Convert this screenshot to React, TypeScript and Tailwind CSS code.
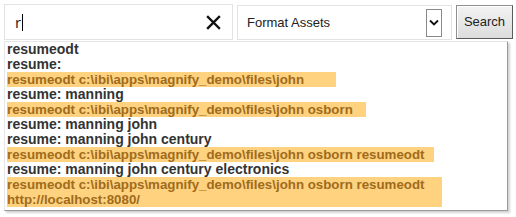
import React from 'react';

type Row = { text: string; hit?: boolean; w?: string };

const rows: Row[] = [
  { text: 'resumeodt' },
  { text: 'resume:' },
  { text: 'resumeodt c:\\ibi\\apps\\magnify_demo\\files\\john', hit: true, w: 'w-[329px]' },
  { text: 'resume: manning' },
  { text: 'resumeodt c:\\ibi\\apps\\magnify_demo\\files\\john osborn', hit: true, w: 'w-[359px]' },
  { text: 'resume: manning john' },
  { text: 'resume: manning john century' },
  { text: 'resumeodt c:\\ibi\\apps\\magnify_demo\\files\\john osborn resumeodt', hit: true, w: 'w-[427px]' },
  { text: 'resume: manning john century electronics' },
];

export default function App() {
  return (
    <div className="w-[516px] h-[217px] bg-white font-['Liberation_Sans',Arial,sans-serif]">
      {/* Search bar */}
      <div className="flex items-start gap-[4px] pl-[4px] pt-[4px]">
        <div className="w-[229px] h-[36px] border border-[#e3e3e3] flex items-center pl-[10px] pr-[11px]">
          <span className="text-[15px] text-[#222] font-['Open_Sans',sans-serif] leading-none">r</span>
          <span className="w-px h-[17px] bg-black ml-px" />
          <div className="flex-1" />
          <svg width="15" height="15" viewBox="0 0 15 15">
            <path d="M2 2 L13 13 M13 2 L2 13" stroke="#111" strokeWidth="2.4" strokeLinecap="square" />
          </svg>
        </div>
        <div className="w-[215px] h-[35px] mt-px border border-[#e3e3e3] flex items-center pl-[9px] pr-[9px]">
          <span className="text-[13px] text-[#222] flex-1">Format Assets</span>
          <div className="w-[16px] h-[28px] border border-[#8a8a8a] bg-white flex items-center justify-center">
            <svg width="10" height="7" viewBox="0 0 10 7">
              <path d="M1 1.5 L5 5.5 L9 1.5" stroke="#111" strokeWidth="1.8" fill="none" />
            </svg>
          </div>
        </div>
        <button className="w-[57px] h-[34px] mt-px border border-[#8f8f8f] border-r-[#5a5a5a] border-b-[#5a5a5a] bg-gradient-to-b from-[#f3f3f3] to-[#dcdcdc] text-[13px] text-[#222] shadow-[inset_1px_1px_0_#fff]">
          Search
        </button>
      </div>

      {/* Suggestions */}
      <div className="ml-[4px] mt-px w-[504px] border border-[#e6e6e6] border-r-[#9a9a9a] border-b-[#9a9a9a] shadow-[2px_2px_2px_rgba(0,0,0,0.18)] pl-[2px] pb-[3px] leading-[15px] font-bold">
        {rows.map((r, i) =>
          r.hit ? (
            <div key={i} className={`${r.w} text-[13.3px] bg-[#fed27e] text-[#a06b1c] whitespace-nowrap`}>
              {r.text}
            </div>
          ) : (
            <div key={i} className="text-[14px] text-[#333]">
              {r.text}
            </div>
          )
        )}
        <div className="w-[435px] text-[13.3px] bg-[#fed27e] text-[#a06b1c]">
          resumeodt c:\ibi\apps\magnify_demo\files\john osborn resumeodt
          <br />
          http://localhost:8080/
        </div>
      </div>
    </div>
  );
}
